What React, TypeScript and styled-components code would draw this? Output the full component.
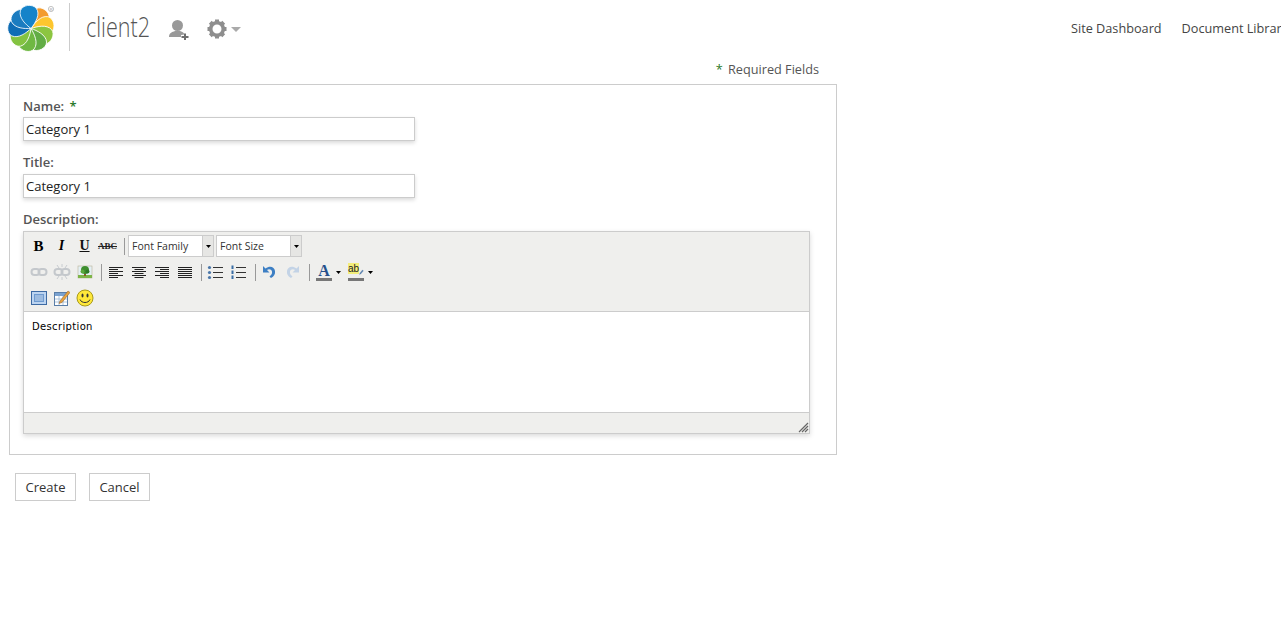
import React from "react";
import styled, { createGlobalStyle } from "styled-components";

const GlobalStyle = createGlobalStyle`
  html, body {
    margin: 0;
    height: 100%;
    overflow: hidden;
    background: #fff;
    font-family: "Open Sans", sans-serif;
    font-size: 13px;
    color: #444;
  }
`;

const petals = [
  { angle: 44, color: "#f39b2d" },
  { angle: 84, color: "#fdc62e" },
  { angle: 122, color: "#8cc540" },
  { angle: 160, color: "#62ad45" },
  { angle: 200, color: "#6fb843" },
  { angle: 240, color: "#84c341" },
  { angle: 278, color: "#0f6db5" },
  { angle: 318, color: "#1b7cc0" },
  { angle: 358, color: "#1583c9" },
];

const Logo = () => (
  <LogoSvg viewBox="0 0 56 52" width="56" height="52">
    <g transform="translate(31 26.500)">
      {petals.map((p) => (
        <path
          key={p.angle}
          transform={`rotate(${p.angle})`}
          d="M0 0C-5-4-12-11-10-18C-8-24 2-25 6-20C10-14 5-6 0 0Z"
          fill={p.color}
          stroke="#fff"
          strokeWidth="0.8"
        />
      ))}
    </g>
    <circle cx="51" cy="7" r="2.6" fill="none" stroke="#aaa" strokeWidth="0.7" />
    <text x="49.800" y="8.600" fontSize="4" fill="#999" fontFamily="Liberation Sans, sans-serif">R</text>
  </LogoSvg>
);

const UserPlus = () => (
  <svg width="22" height="22" viewBox="0 0 22 22">
    <circle cx="9.500" cy="7.500" r="5.500" fill="#999" />
    <path d="M1 19c0-4 3-5 6-6h5c3 1 4 2 4.500 3.500L13 17v2z" fill="#999" />
    <path d="M16 15.500h2v2.500h2.500v2H18v2h-2v-2h-2.500v-2H16z" fill="#6e6e6e" />
  </svg>
);

const Gear = () => (
  <svg width="20" height="20" viewBox="0 0 20 20">
    <circle cx="10" cy="10" r="6.300" fill="none" stroke="#8e8e8e" strokeWidth="3.600" />
    {[0, 45, 90, 135, 180, 225, 270, 315].map((a) => (
      <rect key={a} x="8" y="0.500" width="4" height="3.500" fill="#8e8e8e" transform={`rotate(${a} 10 10)`} />
    ))}
  </svg>
);

const Caret = () => (
  <svg width="10" height="5" viewBox="0 0 10 5">
    <path d="M0 0h10L5 5z" fill="#aaa" />
  </svg>
);

const Chain = ({ faded }: { faded?: boolean }) => (
  <svg width="18" height="18" viewBox="0 0 18 18">
    <g fill="none" stroke="#c4c8cc" strokeWidth="2">
      <rect x="1.500" y="6" width="8" height="6" rx="3" />
      <rect x="8.500" y="6" width="8" height="6" rx="3" />
    </g>
    {faded && (
      <path
        d="M9 1v3M9 14v3M4 2l2 3M14 2l-2 3M4 16l2-3M14 16l-2-3"
        stroke="#c8ccd0"
        strokeWidth="1"
      />
    )}
  </svg>
);

const TreePicture = () => (
  <svg width="16" height="16" viewBox="0 0 16 16">
    <rect x="1" y="2" width="14" height="12" fill="#e4f0f4" stroke="#b9b39a" strokeWidth="0.6" />
    <rect x="1" y="11" width="14" height="3" fill="#7eb548" />
    <rect x="7" y="8" width="2" height="4" fill="#8a5a2b" />
    <circle cx="8" cy="6" r="4" fill="#3f8f2f" />
    <circle cx="5.500" cy="7.500" r="2" fill="#5aa83c" />
    <circle cx="10.500" cy="7.500" r="2" fill="#2f7a27" />
  </svg>
);

const Align = ({ mode }: { mode: "left" | "center" | "right" | "full" }) => {
  const lines = [14, 9, 14, 9, 14, 9];
  return (
    <svg width="14" height="13" viewBox="0 0 14 13">
      {lines.map((w, i) => {
        const width = mode === "full" ? 14 : w;
        const x = mode === "left" || mode === "full" ? 0 : mode === "right" ? 14 - width : (14 - width) / 2;
        return <rect key={i} x={x} y={i * 2 + 1} width={width} height="1" fill="#222" />;
      })}
    </svg>
  );
};

const ListIcon = ({ numbered }: { numbered?: boolean }) => (
  <svg width="16" height="15" viewBox="0 0 16 15">
    {[2, 7, 12].map((y) => (
      <React.Fragment key={y}>
        <rect x="6" y={y} width="10" height="1" fill="#333" />
        {numbered ? (
          <rect x="1.500" y={y - 1.500} width="2" height="3.500" fill="#3a6ea5" />
        ) : (
          <circle cx="2.500" cy={y + 0.500} r="1.600" fill="#4a76a8" />
        )}
      </React.Fragment>
    ))}
  </svg>
);

const Undo = ({ redo }: { redo?: boolean }) => (
  <svg width="14" height="14" viewBox="0 0 14 14" style={redo ? { transform: "scaleX(-1)" } : undefined}>
    <path
      d="M1 1v6.500h6.500L5 5c2-1.500 4.500-.5 5 1.500c.3 2-.5 3.500-2.500 5l1.500 1.500c3-1.500 4.500-4 4-7C12.500 2 8 0 3.500 3.500z"
      fill={redo ? "#c3d3e6" : "#3d7fc4"}
    />
  </svg>
);

const WindowIcon = () => (
  <svg width="16" height="14" viewBox="0 0 16 14">
    <rect x="0.500" y="0.500" width="15" height="13" fill="#bcd4f0" stroke="#3d6aa3" />
    <rect x="3" y="3" width="10" height="8" fill="#6f9bd0" />
    <path d="M4 5h8M4 7h8M4 9h8" stroke="#e3edf8" strokeWidth="0.8" />
  </svg>
);

const TableEdit = () => (
  <svg width="16" height="16" viewBox="0 0 16 16">
    <rect x="0.500" y="2.500" width="13" height="13" fill="#fff" stroke="#5a7ea8" />
    <rect x="1" y="3" width="12" height="3" fill="#7aa2d0" />
    <path d="M5 6v9M9 6v9M1 9h12M1 12h12" stroke="#9db7d3" strokeWidth="0.8" />
    <path d="M6 11l8-10l2 1.500l-8 10l-3 1z" fill="#e8a33d" stroke="#8a5a2b" strokeWidth="0.5" />
  </svg>
);

const Smiley = () => (
  <svg width="18" height="18" viewBox="0 0 18 18">
    <circle cx="9" cy="9" r="8" fill="#ffe83a" stroke="#a89a1a" />
    <ellipse cx="6.500" cy="6.500" rx="1" ry="2" fill="#333" />
    <ellipse cx="11.500" cy="6.500" rx="1" ry="2" fill="#333" />
    <path d="M4 10.500c1.500 4 8.500 4 10 0" fill="none" stroke="#333" strokeWidth="1" />
  </svg>
);

const Pencil = () => (
  <svg width="10" height="12" viewBox="0 0 10 12">
    <path d="M1 11l1-3l5-6l2 1.500l-5 6z" fill="#5a86b8" stroke="#3d5f86" strokeWidth="0.5" />
  </svg>
);

const SmallArrow = () => (
  <svg width="5" height="3" viewBox="0 0 5 3">
    <path d="M0 0h5L2.500 3z" fill="#000" />
  </svg>
);

const Select = ({ label }: { label: string }) => (
  <SelectBox>
    <SelectText>{label}</SelectText>
    <SelectArrow>
      <SmallArrow />
    </SelectArrow>
  </SelectBox>
);

export default function App() {
  return (
    <Page>
      <GlobalStyle />
      <Header>
        <Brand>
          <Logo />
          <Divider />
          <SiteName>client2</SiteName>
          <HeaderIcons>
            <UserPlus />
            <GearMenu>
              <Gear />
              <Caret />
            </GearMenu>
          </HeaderIcons>
        </Brand>
        <Nav>
          <NavLink>Site Dashboard</NavLink>
          <NavLink>Document Library</NavLink>
        </Nav>
      </Header>

      <FormArea>
        <RequiredNote>
          <Star>*</Star> Required Fields
        </RequiredNote>
        <FormBox>
          <Label $height={19}>
            Name: <Star>*</Star>
          </Label>
          <TextInput defaultValue="Category 1" />
          <Label $top={13} $height={20}>Title:</Label>
          <TextInput defaultValue="Category 1" />
          <Label $top={13} $height={20}>Description:</Label>
          <Editor>
            <Toolbar>
              <ToolRow>
                <ToolButton><Bold>B</Bold></ToolButton>
                <ToolButton><Italic>I</Italic></ToolButton>
                <ToolButton><Under>U</Under></ToolButton>
                <ToolButton><Strike>ABC</Strike></ToolButton>
                <Sep $left={5} $right={3} />
                <Select label="Font Family" />
                <Select label="Font Size" />
              </ToolRow>
              <ToolRow>
                <ToolButton><Chain /></ToolButton>
                <ToolButton><Chain faded /></ToolButton>
                <ToolButton><TreePicture /></ToolButton>
                <Sep $left={5} $right={2} />
                <ToolButton><Align mode="left" /></ToolButton>
                <ToolButton><Align mode="center" /></ToolButton>
                <ToolButton><Align mode="right" /></ToolButton>
                <ToolButton><Align mode="full" /></ToolButton>
                <Sep $left={5} $right={1} />
                <ToolButton><ListIcon /></ToolButton>
                <ToolButton><ListIcon numbered /></ToolButton>
                <Sep $left={6} $right={1} />
                <ToolButton><Undo /></ToolButton>
                <ToolButton $wide={25}><Undo redo /></ToolButton>
                <Sep $left={4} $right={3} />
                <SplitButton>
                  <ColorGlyph $bar="#777">
                    <ForeLetter>A</ForeLetter>
                  </ColorGlyph>
                  <SmallArrow />
                </SplitButton>
                <SplitButton>
                  <ColorGlyph $bar="#777">
                    <HighlightLetters>ab</HighlightLetters>
                    <Pencil />
                  </ColorGlyph>
                  <SmallArrow />
                </SplitButton>
              </ToolRow>
              <ToolRow>
                <ToolButton><WindowIcon /></ToolButton>
                <ToolButton><TableEdit /></ToolButton>
                <ToolButton><Smiley /></ToolButton>
              </ToolRow>
            </Toolbar>
            <EditArea>Description</EditArea>
            <StatusBar>
              <ResizeHandle viewBox="0 0 11 11" width="11" height="11">
                <path d="M10 1L1 10M10 4L4 10M10 7L7 10" stroke="#666" strokeWidth="1.200" />
              </ResizeHandle>
            </StatusBar>
          </Editor>
        </FormBox>
        <Actions>
          <ActionButton>Create</ActionButton>
          <ActionButton>Cancel</ActionButton>
        </Actions>
      </FormArea>
    </Page>
  );
}

const Page = styled.div`
  width: 1281px;
  overflow: hidden;
`;

const Header = styled.header`
  display: flex;
  height: 56px;
`;

const Brand = styled.div`
  flex: none;
  width: 1071px;
  display: flex;
  align-items: center;
`;

const LogoSvg = styled.svg`
  flex: none;
`;

const Divider = styled.div`
  width: 1px;
  height: 48px;
  margin: -3px 0 0 13px;
  background: #ccc;
`;

const SiteName = styled.div`
  width: 64px;
  margin: -4px 0 0 16px;
  font-size: 28px;
  font-weight: 300;
  color: #555;
  white-space: nowrap;
  transform: scaleX(0.77);
  transform-origin: left center;
`;

const HeaderIcons = styled.div`
  display: flex;
  align-items: center;
  gap: 17px;
  margin: 2px 0 0 18px;
`;

const GearMenu = styled.div`
  display: flex;
  align-items: center;
  gap: 4px;
`;

const Nav = styled.nav`
  flex: none;
  display: flex;
  gap: 20px;
  padding-top: 19px;
`;

const NavLink = styled.a`
  font-size: 12.7px;
  line-height: 18px;
  color: #444;
  white-space: nowrap;
`;

const FormArea = styled.main`
  width: 828px;
  margin-left: 9px;
`;

const RequiredNote = styled.div`
  height: 28px;
  padding: 4px 18px 0 0;
  box-sizing: border-box;
  line-height: 18px;
  text-align: right;
  font-size: 12.7px;
  color: #555;
`;

const Star = styled.span`
  color: #2a7a2a;
  margin: 0 2px;
`;

const FormBox = styled.section`
  box-sizing: border-box;
  height: 371px;
  border: 1px solid #ccc;
  padding: 13px 13px 0;
`;

const Label = styled.div<{ $top?: number; $height: number }>`
  height: ${(p) => p.$height}px;
  margin-top: ${(p) => p.$top ?? 0}px;
  line-height: 16px;
  font-size: 13px;
  font-weight: 600;
  color: #555;
`;

const TextInput = styled.input`
  display: block;
  box-sizing: border-box;
  width: 392px;
  height: 24px;
  padding: 0 2px;
  border: 1px solid #ccc;
  outline: none;
  font: 13px "Open Sans", sans-serif;
  color: #222;
  box-shadow: 0 2px 4px rgba(0, 0, 0, 0.15);
`;

const Editor = styled.div`
  box-sizing: border-box;
  width: 787px;
  height: 203px;
  border: 1px solid #ccc;
  box-shadow: 0 2px 5px rgba(0, 0, 0, 0.15);
  display: flex;
  flex-direction: column;
`;

const Toolbar = styled.div`
  flex: none;
  height: 78px;
  padding: 1px 0 0 3px;
  background: #efefed;
  border-bottom: 1px solid #ccc;
`;

const ToolRow = styled.div`
  display: flex;
  align-items: center;
  height: 26px;
`;

const ToolButton = styled.div<{ $wide?: number }>`
  flex: none;
  width: ${(p) => p.$wide ?? 23}px;
  height: 20px;
  display: flex;
  align-items: center;
  justify-content: center;
`;

const Bold = styled.span`
  font: bold 15px "Liberation Serif", serif;
  color: #000;
`;

const Italic = styled.span`
  font: italic bold 14px "Liberation Serif", serif;
  color: #000;
`;

const Under = styled.span`
  font: bold 14px "Liberation Serif", serif;
  color: #111;
  text-decoration: underline;
`;

const Strike = styled.span`
  font: bold 9px "Liberation Serif", serif;
  color: #222;
  text-decoration: line-through;
`;

const Sep = styled.div<{ $left: number; $right: number }>`
  flex: none;
  width: 1px;
  height: 17px;
  margin: 0 ${(p) => p.$right}px 0 ${(p) => p.$left}px;
  background: #999;
`;

const SelectBox = styled.div`
  flex: none;
  box-sizing: border-box;
  width: 86px;
  height: 22px;
  margin-right: 2px;
  display: flex;
  background: #fff;
  border: 1px solid #ccc;
`;

const SelectText = styled.div`
  flex: 1;
  padding-left: 3px;
  line-height: 20px;
  font-size: 10.500px;
  color: #333;
`;

const SelectArrow = styled.div`
  flex: none;
  width: 10px;
  display: flex;
  align-items: center;
  justify-content: center;
  background: #e6e6e4;
  border-left: 1px solid #ccc;
`;

const SplitButton = styled.div`
  flex: none;
  width: 32px;
  display: flex;
  align-items: center;
  gap: 4px;
  padding-left: 3px;
  box-sizing: border-box;
`;

const ColorGlyph = styled.div<{ $bar: string }>`
  flex: none;
  display: flex;
  align-items: flex-end;
  justify-content: center;
  width: 16px;
  height: 18px;
  border-bottom: 3px solid ${(p) => p.$bar};
  box-sizing: border-box;
`;

const ForeLetter = styled.span`
  font: bold 16px/15px "Liberation Serif", serif;
  color: #26508c;
`;

const HighlightLetters = styled.span`
  font: 10px/11px "Liberation Sans", sans-serif;
  color: #222;
  background: #f3ee7a;
  align-self: flex-start;
`;

const EditArea = styled.div`
  flex: 1;
  padding: 9px 8px;
  background: #fff;
  font: 10px/12px "DejaVu Sans", sans-serif;
  letter-spacing: 0.35px;
  color: #000;
`;

const StatusBar = styled.div`
  position: relative;
  flex: none;
  height: 20px;
  background: #efefed;
  border-top: 1px solid #ccc;
`;

const ResizeHandle = styled.svg`
  position: absolute;
  right: 0;
  bottom: 0;
`;

const Actions = styled.div`
  display: flex;
  gap: 13px;
  margin: 18px 0 0 6px;
`;

const ActionButton = styled.button`
  box-sizing: border-box;
  width: 61px;
  height: 28px;
  padding: 0;
  background: #fff;
  border: 1px solid #ccc;
  font: 13px "Open Sans", sans-serif;
  color: #333;
`;
